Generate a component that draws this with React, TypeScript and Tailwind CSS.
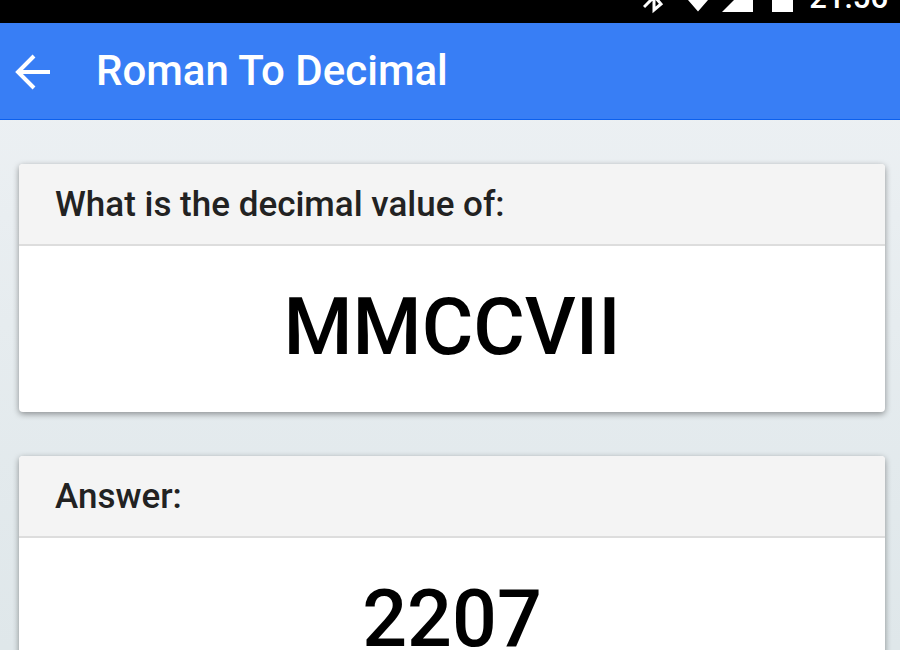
import type { ReactNode } from "react";

function StatusBar() {
  return (
    <div className="flex h-[23px] shrink-0 items-end justify-end overflow-hidden bg-black pr-3 text-white">
      <svg className="h-[23px] w-[166px] shrink-0" viewBox="0 0 166 23" fill="currentColor" aria-hidden="true">
        <path d="M1 7L19 -11M5 -11L18 4L11 10V-12" fill="none" stroke="currentColor" strokeWidth="3" />
        <path d="M44 0H65V0L55 11.5L45 0Z" />
        <path d="M79 12L110 -19V12Z" />
        <path d="M129 -20H150V12H129Z" />
      </svg>
      <span className="pb-[9px] text-[31px] leading-8 font-medium">21:56</span>
    </div>
  );
}

function Card({ title, children }: { title: string; children: ReactNode }) {
  return (
    <section className="rounded bg-white shadow-[0_2px_6px_rgba(0,0,0,0.4)]">
      <h2 className="h-[82px] rounded-t border-b-2 border-[#dddddd] bg-[#f4f4f4] px-9 pt-5 text-[35px] leading-[42px] font-medium text-[#222222]">
        {title}
      </h2>
      <p className="pt-[34px] pb-[38px] text-center text-[79px] leading-[94px] font-medium text-black">{children}</p>
    </section>
  );
}

export default function App() {
  return (
    <div className="flex h-screen flex-col overflow-hidden bg-linear-to-b from-[#eff2f5] via-[#e6ecef] to-[#dfe7ea] font-[Roboto,sans-serif]">
      <StatusBar />
      <header className="flex h-[97px] shrink-0 items-center border-b border-[#0c60ee] bg-[#387ef5] pt-0.5 text-white">
        <button type="button" aria-label="Back" className="ml-[14px] h-9 w-9">
          <svg viewBox="0 0 36 36" fill="none" stroke="currentColor" strokeWidth="4" aria-hidden="true">
            <path d="M36 18H4M20 2L4 18L20 34" />
          </svg>
        </button>
        <h1 className="ml-[46px] pb-0.5 text-[42px] leading-[48px] font-medium">Roman To Decimal</h1>
      </header>
      <main className="flex flex-col gap-11 pt-11 pr-[15px] pl-[19px]">
        <Card title="What is the decimal value of:">MMCCVII</Card>
        <Card title="Answer:">2207</Card>
      </main>
    </div>
  );
}
